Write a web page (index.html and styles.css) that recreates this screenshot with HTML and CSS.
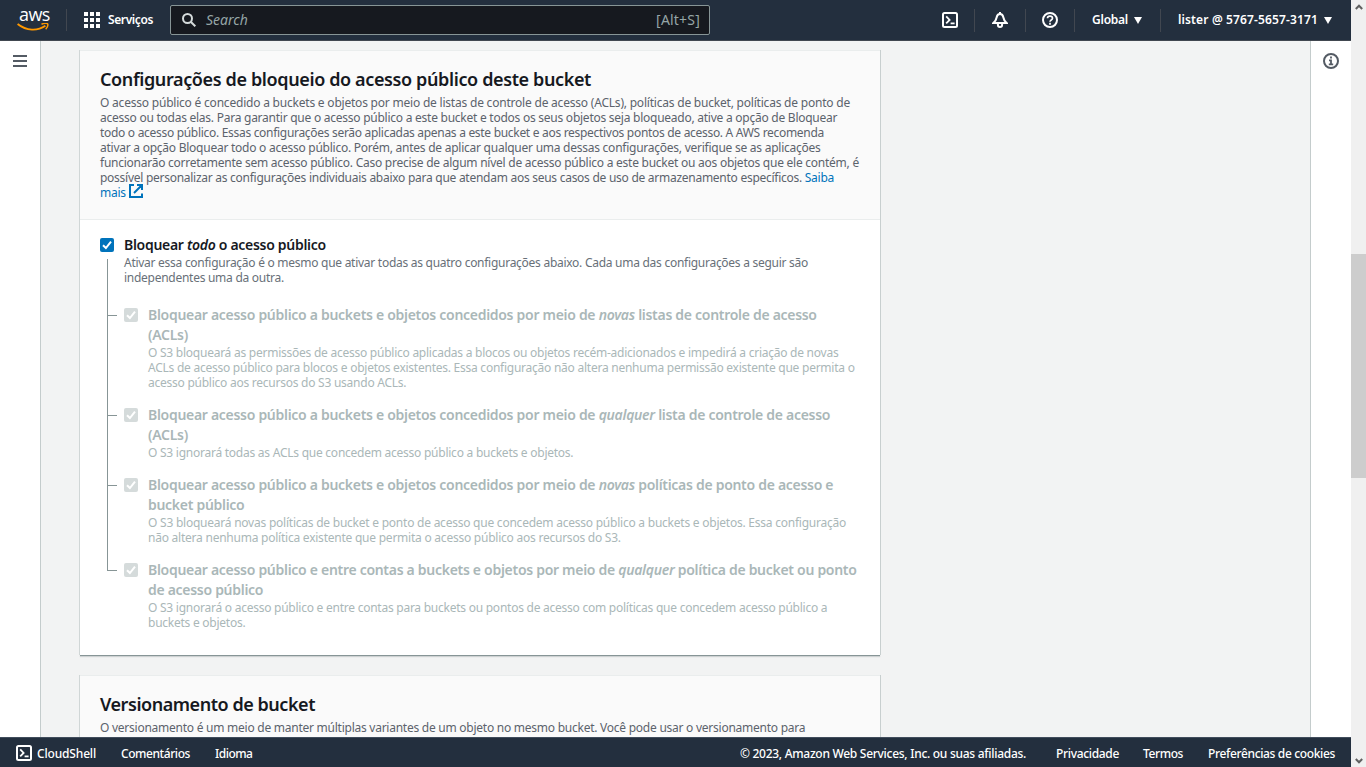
FILE: index.html
```
<!DOCTYPE html>
<html lang="pt-BR">
<head>
<meta charset="utf-8">
<title>Criar bucket S3</title>
<link rel="stylesheet" href="styles.css">
</head>
<body>
<svg width="0" height="0" class="defs">
  <symbol id="check" viewBox="0 0 14 14"><path d="M3 7.2 5.9 10 11 3.6" fill="none" stroke="#fff" stroke-width="2"/></symbol>
  <symbol id="shell" viewBox="0 0 16 16"><rect x="1" y="1" width="14" height="14" rx="1.5" fill="none" stroke="#fff" stroke-width="2"/><path d="M4.2 4.4 7.6 8 4.2 11.4M8.6 11.3h4" fill="none" stroke="#fff" stroke-width="1.8"/></symbol>
</svg>
<div class="window">
  <div class="app">
    <header class="topbar">
      <div class="brand">
        <span class="brand-name">aws</span>
        <svg class="smile" width="32" height="8" viewBox="0 0 32 8"><path d="M.6 1C9.5 8 20.500 8.300 28.400 2.800" fill="none" stroke="#f90" stroke-width="1.900"/><path d="M24.500 1.300C27 .1 30.200.1 30.700 1c.4 1.100-.5 3.700-2 5.300" fill="none" stroke="#f90" stroke-width="1.500"/></svg>
      </div>
      <div class="services">
        <svg width="16" height="16" viewBox="0 0 16 16" fill="#fff"><path d="M0 0h4v4H0zM6 0h4v4H6zM12 0h4v4h-4zM0 6h4v4H0zM6 6h4v4H6zM12 6h4v4h-4zM0 12h4v4H0zM6 12h4v4H6zM12 12h4v4h-4z"/></svg>
        <span class="lbl">Serviços</span>
      </div>
      <div class="search">
        <svg width="14" height="14" viewBox="0 0 14 14" fill="none" stroke="#d5dbdb" stroke-width="2"><circle cx="5.500" cy="5.500" r="4.500"/><path d="m8.700 8.700 4.600 4.600"/></svg>
        <em>Search</em>
        <span class="hint">[Alt+S]</span>
      </div>
      <nav class="tools">
        <div class="tool"><svg width="16" height="16"><use href="#shell"/></svg></div>
        <div class="tool"><svg width="16" height="16" viewBox="0 0 16 16" fill="none" stroke="#fff" stroke-width="2"><path d="M8 2C5.500 2 4.900 3.700 4.600 5.500 4.200 8 3.200 9.500 1.400 11h13.200C12.800 9.500 11.800 8 11.400 5.500 11.100 3.700 10.500 2 8 2z"/><path d="M8 0v2M5.900 11.500v1.200c0 1.400.9 2.300 2.100 2.300s2.100-.9 2.100-2.300v-1.200"/></svg></div>
        <div class="tool"><svg width="16" height="16" viewBox="0 0 16 16" fill="none" stroke="#fff" stroke-width="2"><circle cx="8" cy="8" r="7"/><path stroke-width="1.700" d="M5.500 6.300c0-3 5-3 5 0 0 1.700-2.500 1.700-2.500 3.500M8 10.800v1.900"/></svg></div>
        <div class="tool region"><span class="lbl">Global</span><i class="caret"></i></div>
        <div class="tool user"><span class="lbl">lister @ 5767-5657-3171</span><i class="caret"></i></div>
      </nav>
    </header>

    <div class="body">
      <aside class="side left"><svg width="14" height="12" viewBox="0 0 14 12" fill="#545b64"><path d="M0 0h14v2H0zM0 5h14v2H0zM0 10h14v2H0z"/></svg></aside>
      <main class="content">
        <section class="card">
          <div class="card-head">
            <h2>Configurações de bloqueio do acesso público deste bucket</h2>
            <p class="desc intro">
              <span>O acesso público é concedido a buckets e objetos por meio de listas de controle de acesso (ACLs), políticas de bucket, políticas de ponto de</span>
              <span>acesso ou todas elas. Para garantir que o acesso público a este bucket e todos os seus objetos seja bloqueado, ative a opção de Bloquear</span>
              <span>todo o acesso público. Essas configurações serão aplicadas apenas a este bucket e aos respectivos pontos de acesso. A AWS recomenda</span>
              <span>ativar a opção Bloquear todo o acesso público. Porém, antes de aplicar qualquer uma dessas configurações, verifique se as aplicações</span>
              <span>funcionarão corretamente sem acesso público. Caso precise de algum nível de acesso público a este bucket ou aos objetos que ele contém, é</span>
              <span>possível personalizar as configurações individuais abaixo para que atendam aos seus casos de uso de armazenamento específicos. <a>Saiba</a></span>
              <span><a class="more">mais <svg width="14" height="14" viewBox="0 0 14 14" fill="none" stroke="#0073bb" stroke-width="2"><path d="M5 1H1v12h12V9.500M8 1h5v5M13 1 5 9"/></svg></a></span>
            </p>
          </div>
          <div class="card-body">
            <div class="option">
              <span class="box on"><svg width="14" height="14"><use href="#check"/></svg></span>
              <div>
                <h3>Bloquear <em>todo</em> o acesso público</h3>
                <p class="desc"><span>Ativar essa configuração é o mesmo que ativar todas as quatro configurações abaixo. Cada uma das configurações a seguir são</span><span>independentes uma da outra.</span></p>
              </div>
            </div>
            <div class="tree">
              <div class="option sub">
                <span class="box"><svg width="14" height="14"><use href="#check"/></svg></span>
                <div>
                  <h3><span>Bloquear acesso público a buckets e objetos concedidos por meio de <em>novas</em> listas de controle de acesso</span><span>(ACLs)</span></h3>
                  <p class="desc"><span>O S3 bloqueará as permissões de acesso público aplicadas a blocos ou objetos recém-adicionados e impedirá a criação de novas</span><span>ACLs de acesso público para blocos e objetos existentes. Essa configuração não altera nenhuma permissão existente que permita o</span><span>acesso público aos recursos do S3 usando ACLs.</span></p>
                </div>
              </div>
              <div class="option sub">
                <span class="box"><svg width="14" height="14"><use href="#check"/></svg></span>
                <div>
                  <h3><span>Bloquear acesso público a buckets e objetos concedidos por meio de <em>qualquer</em> lista de controle de acesso</span><span>(ACLs)</span></h3>
                  <p class="desc"><span>O S3 ignorará todas as ACLs que concedem acesso público a buckets e objetos.</span></p>
                </div>
              </div>
              <div class="option sub">
                <span class="box"><svg width="14" height="14"><use href="#check"/></svg></span>
                <div>
                  <h3><span>Bloquear acesso público a buckets e objetos concedidos por meio de <em>novas</em> políticas de ponto de acesso e</span><span>bucket público</span></h3>
                  <p class="desc wide"><span>O S3 bloqueará novas políticas de bucket e ponto de acesso que concedem acesso público a buckets e objetos. Essa configuração</span><span>não altera nenhuma política existente que permita o acesso público aos recursos do S3.</span></p>
                </div>
              </div>
              <div class="option sub">
                <span class="box"><svg width="14" height="14"><use href="#check"/></svg></span>
                <div>
                  <h3><span>Bloquear acesso público e entre contas a buckets e objetos por meio de <em>qualquer</em> política de bucket ou ponto</span><span>de acesso público</span></h3>
                  <p class="desc"><span>O S3 ignorará o acesso público e entre contas para buckets ou pontos de acesso com políticas que concedem acesso público a</span><span>buckets e objetos.</span></p>
                </div>
              </div>
            </div>
          </div>
        </section>
        <section class="card">
          <div class="card-head">
            <h2 class="tight">Versionamento de bucket</h2>
            <p class="desc"><span>O versionamento é um meio de manter múltiplas variantes de um objeto no mesmo bucket. Você pode usar o versionamento para</span></p>
          </div>
        </section>
      </main>
      <aside class="side right"><svg width="16" height="16" viewBox="0 0 16 16" fill="none" stroke="#545b64" stroke-width="2"><circle cx="8" cy="8" r="7"/><path stroke-width="1.800" d="M8 3.500v2M6 7.400h2V12M5.800 11.300h4.400"/></svg></aside>
    </div>

    <footer class="bottombar">
      <span class="cloud"><svg width="16" height="16"><use href="#shell"/></svg>CloudShell</span>
      <span class="feedback">Comentários</span>
      <span class="language">Idioma</span>
      <span class="copy">© 2023, Amazon Web Services, Inc. ou suas afiliadas.</span>
      <span class="privacy">Privacidade</span>
      <span class="terms">Termos</span>
      <span class="cookies">Preferências de cookies</span>
    </footer>
  </div>
  <div class="scrollbar">
    <svg width="8" height="6" viewBox="0 0 8 6"><path d="M.8 5 4 1.700 7.200 5" fill="none" stroke="#606060" stroke-width="2"/></svg>
    <i class="thumb"></i>
    <svg width="8" height="6" viewBox="0 0 8 6"><path d="M.8 1 4 4.300 7.200 1" fill="none" stroke="#606060" stroke-width="2"/></svg>
  </div>
</div>
</body>
</html>
```
FILE: styles.css
```
* { box-sizing: border-box; }
body { margin: 0; font-family: "Noto Sans", "Open Sans", sans-serif; background: #f2f3f3; overflow: hidden; }
svg { display: block; flex: none; }
.defs { position: absolute; }
h2, h3, p { margin: 0; }
.window { display: flex; width: 1366px; height: 767px; }
.app { width: 1351px; height: 767px; display: flex; flex-direction: column; }

/* Top navigation */
.topbar { flex: none; height: 41px; display: flex; align-items: center; background: #232f3e; border-bottom: 1px solid #414750; color: #fff; }
.brand { width: 67px; height: 22px; border-right: 1px solid #414750; display: flex; flex-direction: column; padding-left: 17px; }
.brand-name { font: 500 18px/18px "Open Sans", sans-serif; letter-spacing: -.6px; height: 12px; margin-top: -4px; padding-left: 2px; }
.smile { margin-top: 6px; }
.services { width: 103px; display: flex; align-items: center; gap: 8px; padding-left: 17px; }
.lbl { font-size: 12px; font-weight: 600; line-height: 16px; letter-spacing: -.39px; white-space: nowrap; }
.search { width: 540px; height: 30px; border: 1px solid #879596; border-radius: 2px; background: #16191f; display: flex; align-items: center; padding: 0 9px 0 11px; font-size: 14px; line-height: 18px; color: #95a5a6; }
.search em { margin: -1px 0 0 10px; letter-spacing: 0; }
.search .hint { margin: -1px 0 0 auto; letter-spacing: .2px; }
.tools { margin-left: auto; display: flex; align-items: center; }
.tool { height: 23px; width: 50px; display: flex; align-items: center; justify-content: center; border-right: 1px solid #414750; }
.tool:nth-child(2) { width: 51px; }
.tool:nth-child(3) { width: 49px; }
.tool.region { width: 86px; justify-content: flex-start; padding-left: 17px; gap: 6px; }
.tool.region .lbl { letter-spacing: -.24px; }
.tool.user { width: 190px; justify-content: flex-start; padding-left: 17px; gap: 6px; border-right: 0; }
.tool.user .lbl { letter-spacing: .136px; }
.caret { border: 4px solid transparent; border-top: 7px solid #fff; border-bottom: 0; }

/* Page area */
.body { flex: 1; min-height: 0; display: flex; overflow: hidden; }
.side { flex: none; background: #fff; }
.left { width: 41px; border-right: 1px solid #c4cccc; padding: 14px 0 0 13px; }
.right { width: 41px; border-left: 1px solid #c4cccc; padding: 12px 0 0 12px; }
.content { flex: 1; min-width: 0; padding: 9px 0 0 39px; display: flex; flex-direction: column; gap: 20px; }
.card { flex: none; width: 800px; background: #fff; border-top: 1px solid #eaeded; box-shadow: -1px 0 #d0d6d6, 1px 0 #c8cfcf, 0 1px #879596, 0 2px 1px rgba(0, 28, 36, .15); }
.card-head { background: #fafafa; border-bottom: 1px solid #eaeded; padding: 17px 20px 19px; }
h2 { font-size: 18px; font-weight: 600; line-height: 22px; color: #16191f; letter-spacing: -.375px; margin-bottom: 5px; white-space: nowrap; }
h2.tight { letter-spacing: -.457px; }
.desc { font-size: 12px; line-height: 15px; color: #5c636c; letter-spacing: -.25px; }
.desc > span, h3 > span { display: block; white-space: nowrap; }
.intro > span:nth-child(1) { letter-spacing: -.209px; }
.intro > span:nth-child(3) { letter-spacing: -.3px; }
.intro > span:nth-child(6) { letter-spacing: -.268px; }
.desc a { color: #0073bb; }
.more { display: flex; gap: 3px; }
.more svg { margin-top: -1px; }

.card-body { padding: 15px 20px 25px; }
.option { display: flex; gap: 10px; }
.box { flex: none; width: 14px; height: 14px; margin-top: 3px; border-radius: 2px; background: #d5dbdb; }
.box.on { background: #0073bb; }
h3 { font-size: 14px; font-weight: 600; line-height: 20px; color: #16191f; letter-spacing: -.3px; white-space: nowrap; }
.option .desc { color: #687078; letter-spacing: -.27px; }
.tree { margin-top: 20px; display: flex; flex-direction: column; gap: 15px; position: relative; padding-left: 24px; }
.tree::before { content: ""; position: absolute; left: 7px; top: -46px; bottom: 59px; width: 1px; background: #879596; }
.sub { position: relative; }
.sub::before { content: ""; position: absolute; left: -17px; top: 10px; width: 10px; height: 1px; background: #879596; }
.sub h3, .sub .desc { color: #aab7b8; }
.sub .desc { letter-spacing: -.247px; }
.sub .desc.wide { letter-spacing: -.234px; }
.sub h3 { letter-spacing: -.294px; }

/* Footer */
.bottombar { flex: none; height: 30px; background: #232f3e; border-top: 1px solid #414d5c; color: #fff; display: flex; align-items: center; padding: 1px 16px 0; font-size: 12px; font-weight: 500; white-space: nowrap; }
.cloud { display: flex; align-items: center; gap: 5px; width: 105px; letter-spacing: -.165px; }
.feedback { width: 94px; letter-spacing: -.424px; }
.language { letter-spacing: -.5px; }
.copy { margin-left: auto; width: 316px; letter-spacing: -.283px; }
.privacy { width: 87px; letter-spacing: -.326px; }
.terms { width: 65px; letter-spacing: -.399px; }
.cookies { width: 127px; letter-spacing: -.352px; }

/* Window scrollbar */
.scrollbar { width: 15px; height: 767px; background: #f0f0f0; display: flex; flex-direction: column; align-items: center; justify-content: space-between; padding: 4px 0 3px; }
.thumb { width: 15px; height: 224px; background: #cdcdcd; margin-bottom: 36px; }
```
